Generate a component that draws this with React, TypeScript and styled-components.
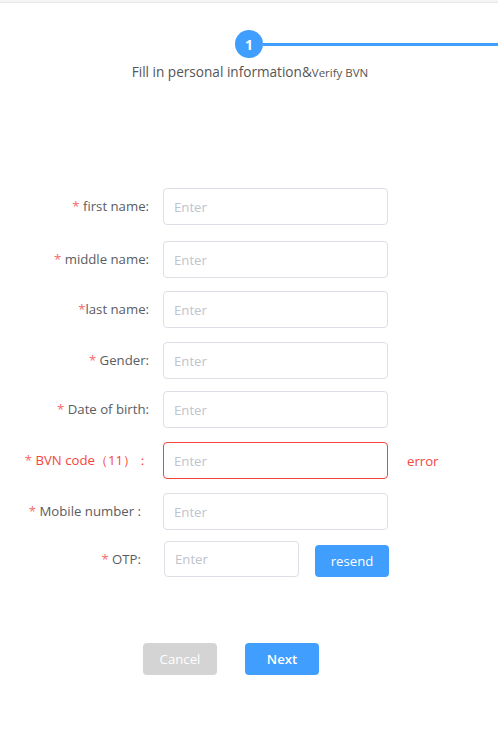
import React from "react";
import styled, { createGlobalStyle } from "styled-components";

const Global = createGlobalStyle`
  html, body { margin: 0; padding: 0; background: #fff; }
  body { font-family: "Open Sans", "Noto Sans", Arial, sans-serif; }
  * { box-sizing: border-box; }
`;

const Page = styled.div`
  width: 498px;
  min-height: 742px;
  background: #fff;
  display: flex;
  flex-direction: column;
`;

const TopBar = styled.div`
  height: 3px;
  background: #f4f4f4;
  border-bottom: 1px solid #e8e8e8;
`;

const StepTrack = styled.div`
  margin-top: 27px;
  display: grid;
  grid-template-columns: 1fr 28px 1fr;
  align-items: center;
`;

const StepCircle = styled.div`
  width: 28px;
  height: 28px;
  border-radius: 50%;
  background: #409eff;
  color: #fff;
  font-weight: 700;
  font-size: 14px;
  display: flex;
  align-items: center;
  justify-content: center;
`;

const StepLine = styled.div`
  height: 3px;
  background: #409eff;
`;

const StepTitle = styled.div`
  margin-top: 5px;
  text-align: center;
  font-size: 13.6px;
  line-height: 18px;
  color: #555;
  padding-left: 2px;
`;

const Small = styled.span`
  font-size: 11.5px;
`;

const Form = styled.div`
  margin-top: 106px;
  display: flex;
  flex-direction: column;
`;

const Row = styled.div<{ $mt: number }>`
  margin-top: ${(p) => p.$mt}px;
  display: grid;
  grid-template-columns: 163px max-content max-content;
  justify-content: start;
  align-items: center;
`;

const Label = styled.label<{ $error?: boolean; $pr: number }>`
  text-align: right;
  padding-right: ${(p) => p.$pr}px;
  padding-bottom: 1px;
  font-size: 13.2px;
  color: ${(p) => (p.$error ? "#f5453d" : "#5a5c61")};
  white-space: nowrap;
`;

const Star = styled.span`
  color: #f56c6c;
`;

const Input = styled.input<{ $error?: boolean; $w?: number }>`
  width: ${(p) => p.$w ?? 225}px;
  height: ${(p) => (p.$w ? 36 : 37)}px;
  border: 1px solid ${(p) => (p.$error ? "#f5453d" : "#dcdfe6")};
  border-radius: 4px;
  padding: 0 10px;
  font-family: inherit;
  font-size: 13.2px;
  color: #606266;
  outline: none;
  &::placeholder { color: #c0c4cc; }
`;

const OtpGroup = styled.div`
  display: flex;
  align-items: flex-end;
  gap: 16px;
  padding-left: 1px;
`;

const ErrorText = styled.span`
  margin-left: 19px;
  font-size: 13.2px;
  color: #f2473f;
`;

const Btn = styled.button<{ $kind: "primary" | "muted" }>`
  width: 74px;
  height: 32px;
  border: none;
  border-radius: 4px;
  background: ${(p) => (p.$kind === "primary" ? "#409eff" : "#d4d4d4")};
  color: #fff;
  font-family: inherit;
  font-size: 13.2px;
  font-weight: ${(p) => (p.$kind === "primary" ? 600 : 400)};
  cursor: pointer;
  padding: 0;
`;

const ResendBtn = styled(Btn)`
  font-weight: 400;
`;

const Actions = styled.div`
  margin-top: 66px;
  padding-left: 143px;
  display: flex;
  gap: 28px;
`;

type Field = {
  star: string;
  label: string;
  mt: number;
  pr: number;
  error?: boolean;
};

const fields: Field[] = [
  { star: "* ", label: "first name:", mt: 0, pr: 14 },
  { star: "* ", label: "middle name:", mt: 16, pr: 14 },
  { star: "*", label: "last name:", mt: 13, pr: 14 },
  { star: "* ", label: "Gender:", mt: 14, pr: 14 },
  { star: "* ", label: "Date of birth:", mt: 12, pr: 14 },
  { star: "* ", label: "BVN code（11）：", mt: 14, pr: 14, error: true },
  { star: "* ", label: "Mobile number :", mt: 14, pr: 22 },
];

export default function App() {
  return (
    <>
      <Global />
      <Page>
        <TopBar />
        <StepTrack>
          <div />
          <StepCircle>1</StepCircle>
          <StepLine />
        </StepTrack>
        <StepTitle>
          Fill in personal information&amp;<Small>Verify BVN</Small>
        </StepTitle>
        <Form>
          {fields.map((f) => (
            <Row key={f.label} $mt={f.mt}>
              <Label $pr={f.pr} $error={f.error}>
                <Star>{f.star}</Star>
                {f.label}
              </Label>
              <Input placeholder="Enter" $error={f.error} />
              {f.error ? <ErrorText>error</ErrorText> : <span />}
            </Row>
          ))}
          <Row $mt={11}>
            <Label $pr={22}>
              <Star>* </Star>OTP:
            </Label>
            <OtpGroup>
              <Input placeholder="Enter" $w={135} />
              <ResendBtn $kind="primary">resend</ResendBtn>
            </OtpGroup>
            <span />
          </Row>
        </Form>
        <Actions>
          <Btn $kind="muted">Cancel</Btn>
          <Btn $kind="primary">Next</Btn>
        </Actions>
      </Page>
    </>
  );
}
